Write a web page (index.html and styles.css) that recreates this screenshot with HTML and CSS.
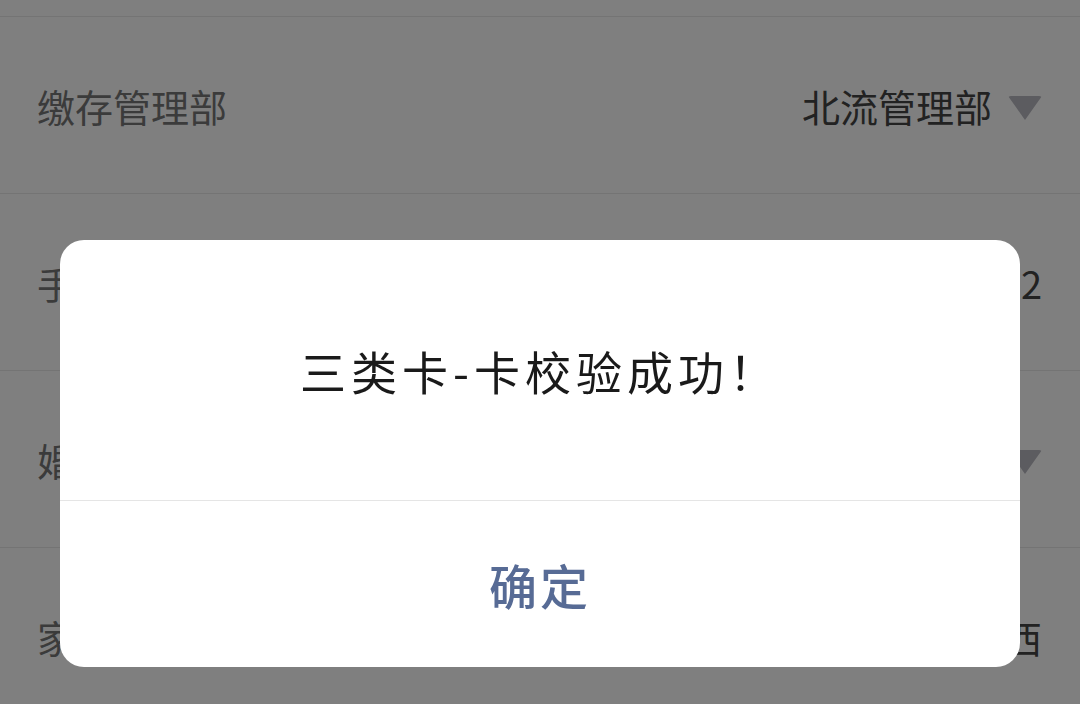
FILE: index.html
```html
<!DOCTYPE html>
<html lang="zh-CN">
<head>
<meta charset="utf-8">
<title>校验</title>
<link rel="stylesheet" href="styles.css">
</head>
<body>
<div class="form">
  <div class="row row-top"></div>
  <div class="row">
    <span class="label">缴存管理部</span>
    <span class="value">北流管理部<i class="caret"></i></span>
  </div>
  <div class="row">
    <span class="label">手机号码</span>
    <span class="value">13877000002</span>
  </div>
  <div class="row">
    <span class="label">婚姻状况</span>
    <span class="value">已婚<i class="caret"></i></span>
  </div>
  <div class="row">
    <span class="label">家庭住址</span>
    <span class="value">广西</span>
  </div>
</div>
<div class="mask"></div>
<div class="dialog">
  <div class="dialog-body">三类卡-卡校验成功！</div>
  <div class="dialog-foot">确定</div>
</div>
</body>
</html>
```
FILE: styles.css
```css
html, body {
  margin: 0;
  padding: 0;
  height: 100%;
  overflow: hidden;
}
body {
  background: #ffffff;
  font-family: "Noto Sans CJK SC", "Noto Sans", sans-serif;
}
.form {
  display: flex;
  flex-direction: column;
}
.row {
  border-bottom: 1px solid #e8e8e8;
  display: flex;
  align-items: center;
  justify-content: space-between;
  padding: 1px 38px 0 37px;
  box-sizing: content-box;
  height: 175px;
  font-size: 38px;
}
.row-top {
  height: 16px;
  padding: 0;
}
.label {
  color: #777777;
  white-space: nowrap;
}
.value {
  color: #444444;
  display: flex;
  align-items: center;
  gap: 16px;
  white-space: nowrap;
}
.caret {
  display: block;
  width: 0;
  height: 0;
  border-left: 17px solid transparent;
  border-right: 17px solid transparent;
  border-top: 24px solid #b8b8c0;
  border-radius: 3px;
  margin-top: 4px;
}
.mask {
  position: fixed;
  inset: 0;
  background: rgba(0, 0, 0, 0.5);
}
.dialog {
  position: absolute;
  left: 60px;
  top: 240px;
  width: 960px;
  height: 427px;
  background: #ffffff;
  border-radius: 24px;
  overflow: hidden;
  display: flex;
  flex-direction: column;
}
.dialog-body {
  height: 260px;
  display: flex;
  align-items: center;
  justify-content: center;
  font-size: 46px;
  letter-spacing: 5px;
  color: #1a1a1a;
  border-bottom: 1px solid #e5e5e5;
}
.dialog-foot {
  flex: 1;
  display: flex;
  align-items: center;
  justify-content: center;
  font-size: 48px;
  font-weight: 500;
  color: #576b95;
  letter-spacing: 3px;
}
```
